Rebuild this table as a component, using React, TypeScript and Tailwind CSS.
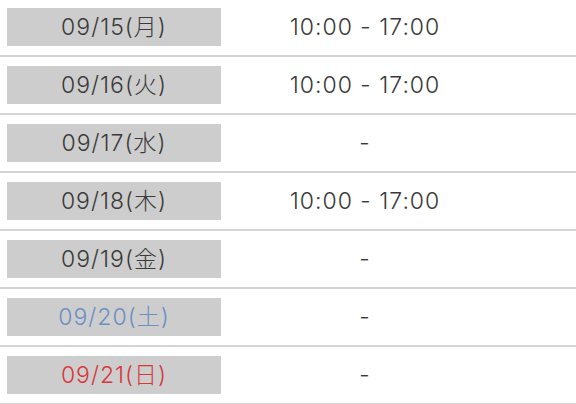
const rows = [
  { date: "09/15(月)", time: "10:00 - 17:00", color: "text-[#3a3a3a]" },
  { date: "09/16(火)", time: "10:00 - 17:00", color: "text-[#3a3a3a]" },
  { date: "09/17(水)", time: "-", color: "text-[#3a3a3a]" },
  { date: "09/18(木)", time: "10:00 - 17:00", color: "text-[#3a3a3a]" },
  { date: "09/19(金)", time: "-", color: "text-[#3a3a3a]" },
  { date: "09/20(土)", time: "-", color: "text-[#6b8fc6]" },
  { date: "09/21(日)", time: "-", color: "text-[#d8373a]" },
];

export default function App() {
  return (
    <div className="h-[404px] w-[576px] overflow-hidden bg-white font-['Inter','Noto_Sans_CJK_JP',sans-serif] text-[23px] font-light tracking-[1px] text-[#3a3a3a]">
      {rows.map((row, i) => (
        <div
          key={row.date}
          className={`flex items-center border-b-2 border-[#d4d4d4] pb-[9px] pl-[7px] ${i === 0 ? "pt-[8px]" : "pt-[9px]"}`}
        >
          <div
            className={`flex h-[38px] w-[214px] items-center justify-center bg-[#cdcdcd] leading-none ${row.color}`}
          >
            {row.date}
          </div>
          <div className="w-[288px] text-center leading-none">{row.time}</div>
        </div>
      ))}
    </div>
  );
}
